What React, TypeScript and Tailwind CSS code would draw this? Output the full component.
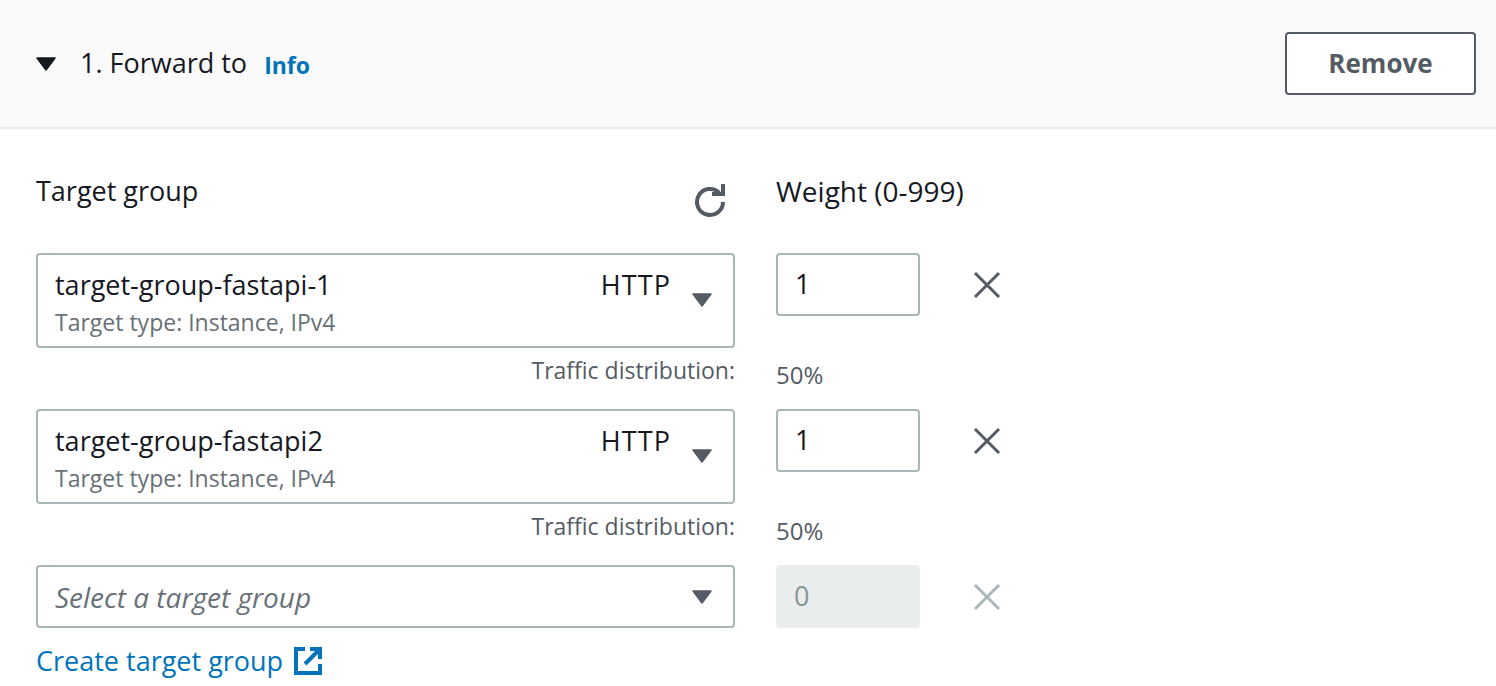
import React from "react";

const font = { fontFamily: '"Open Sans", "Noto Sans", Arial, sans-serif' };

function Caret({ className = "" }: { className?: string }) {
  return (
    <svg className={className} width="20" height="14" viewBox="0 0 20 14">
      <path d="M1 1h18L10 13z" fill="currentColor" stroke="currentColor" strokeWidth="1.5" strokeLinejoin="round" />
    </svg>
  );
}

function CloseIcon({ className = "" }: { className?: string }) {
  return (
    <svg className={className} width="28" height="28" viewBox="0 0 28 28">
      <path d="M2 2l24 24M26 2L2 26" stroke="currentColor" strokeWidth="3" fill="none" />
    </svg>
  );
}

function RefreshIcon() {
  return (
    <svg width="34" height="34" viewBox="0 0 34 34" className="text-[#545b64]">
      <path d="M30 18a13 13 0 1 1-3.8-9.2" stroke="currentColor" strokeWidth="4" fill="none" />
      <path d="M21 10h9V1" stroke="currentColor" strokeWidth="4" fill="none" strokeLinecap="square" />
    </svg>
  );
}

function ExternalIcon() {
  return (
    <svg width="30" height="30" viewBox="0 0 30 30" className="text-[#0073bb]">
      <path d="M12 3H3v24h24v-9" stroke="currentColor" strokeWidth="4" fill="none" />
      <path d="M12 18L25 5" stroke="currentColor" strokeWidth="4" fill="none" />
      <path d="M17 3h10v10" stroke="currentColor" strokeWidth="4" fill="none" />
    </svg>
  );
}

type Row = { name: string; pct: string };

const rows: Row[] = [
  { name: "target-group-fastapi-1", pct: "50%" },
  { name: "target-group-fastapi2", pct: "50%" },
];

function TargetRow({ row }: { row: Row }) {
  return (
    <>
      <div className="grid grid-cols-[699px_144px_auto] gap-x-[41px]">
        <div className="flex h-[95px] rounded-[4px] border-2 border-[#aab7b8] pl-[17px] pr-[21px]">
          <div className="flex-1 pt-[12px]">
            <div className="text-[27px] leading-[36px] text-[#16191f]">{row.name}</div>
            <div className="mt-[2px] text-[23px] leading-[34px] text-[#687078]">Target type: Instance, IPv4</div>
          </div>
          <div className="pt-[12px] text-[27px] leading-[36px] tracking-[0.04em] text-[#16191f]">HTTP</div>
          <Caret className="ml-[21px] mt-[38px] text-[#545b64]" />
        </div>
        <div className="flex h-[63px] items-center rounded-[4px] border-2 border-[#aab7b8] px-[17px] text-[27px] text-[#16191f]">1</div>
        <div className="flex h-[63px] items-center pl-[12px]">
          <CloseIcon className="text-[#545b64]" />
        </div>
      </div>
      <div className="grid h-[61px] grid-cols-[699px_144px] gap-x-[41px]">
        <div className="pt-[6px] text-right text-[23px] leading-[32px] text-[#545b64]">Traffic distribution:</div>
        <div className="pt-[11px] text-[24px] leading-[32px] text-[#545b64]">{row.pct}</div>
      </div>
    </>
  );
}

export default function App() {
  return (
    <div className="min-h-[686px] w-[1496px] bg-white" style={font}>
      <header className="flex h-[129px] items-center border-b-2 border-[#eaeded] bg-[#fafafa] pl-[36px] pr-[20px]">
        <Caret className="text-[#16191f]" />
        <h2 className="ml-[24px] text-[27px] text-[#16191f]">1. Forward to</h2>
        <a className="ml-[17px] mt-[3px] text-[23px] font-bold text-[#0073bb]">Info</a>
        <button
          type="button"
          className="ml-auto h-[63px] w-[191px] rounded-[4px] border-2 border-[#545b64] bg-white text-[26px] font-bold text-[#545b64]"
        >
          Remove
        </button>
      </header>

      <section className="px-[36px] pt-[41px]">
        <div className="grid h-[83px] grid-cols-[699px_auto] gap-x-[41px]">
          <div className="flex items-start justify-between">
            <div className="pt-[3px] text-[27px] leading-[36px] text-[#16191f]">Target group</div>
            <div className="mr-[8px] mt-[14px]">
              <RefreshIcon />
            </div>
          </div>
          <div className="pt-[3px] text-[28px] leading-[36px] text-[#16191f]">Weight (0-999)</div>
        </div>

        {rows.map((row) => (
          <TargetRow key={row.name} row={row} />
        ))}

        <div className="grid grid-cols-[699px_144px_auto] gap-x-[41px]">
          <div className="flex h-[63px] items-center rounded-[4px] border-2 border-[#aab7b8] pl-[17px] pr-[21px]">
            <span className="flex-1 text-[28px] italic text-[#687078]">Select a target group</span>
            <Caret className="text-[#545b64]" />
          </div>
          <div className="flex h-[63px] items-center rounded-[4px] bg-[#eaeded] px-[18px] text-[27px] text-[#879596]">0</div>
          <div className="flex h-[63px] items-center pl-[12px]">
            <CloseIcon className="text-[#aab7b8]" />
          </div>
        </div>

        <a className="mt-[13px] flex items-center gap-[10px] text-[27px] text-[#0073bb]">
          Create target group
          <ExternalIcon />
        </a>
      </section>
    </div>
  );
}
